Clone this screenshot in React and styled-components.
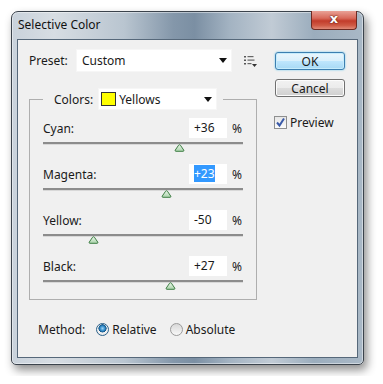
import React from "react";
import styled, { createGlobalStyle } from "styled-components";

const GlobalStyle = createGlobalStyle`
  html, body {
    margin: 0;
    padding: 0;
    background: #fff;
  }
  body {
    font-family: "Noto Sans", "DejaVu Sans", sans-serif;
    font-size: 12px;
    color: #1a1a1a;
  }
`;

const channels = [
  { name: "Cyan", value: 36 },
  { name: "Magenta", value: 23, selected: true },
  { name: "Yellow", value: -50 },
  { name: "Black", value: 27 },
];

const fmt = (v) => (v > 0 ? `+${v}` : `${v}`);

function Arrow() {
  return (
    <svg width="8" height="5" viewBox="0 0 8 5">
      <polygon points="0,0 8,0 4,5" fill="#111" />
    </svg>
  );
}

function ListIcon() {
  return (
    <svg width="13" height="12" viewBox="0 0 13 12">
      <rect x="0" y="1" width="2" height="1.5" fill="#555" />
      <rect x="0" y="4.5" width="2" height="1.5" fill="#555" />
      <rect x="0" y="8" width="2" height="1.5" fill="#555" />
      <rect x="3.5" y="1" width="6" height="1.2" fill="#666" />
      <rect x="3.5" y="4.5" width="7" height="1.2" fill="#666" />
      <rect x="3.5" y="8" width="4" height="1.2" fill="#666" />
      <polygon points="8,9 13,9 10.5,12" fill="#333" />
    </svg>
  );
}

function Thumb() {
  return (
    <svg width="11" height="8" viewBox="0 0 11 8">
      <defs>
        <linearGradient id="thumbFill" x1="0" y1="0" x2="0" y2="1">
          <stop offset="0" stopColor="#eaf6ea" />
          <stop offset="1" stopColor="#a9d2a9" />
        </linearGradient>
      </defs>
      <path
        d="M4.6 1.2 Q5.5 0.2 6.4 1.2 L9.8 6.2 Q10.2 7.3 9 7.3 L2 7.3 Q0.8 7.3 1.2 6.2 Z"
        fill="url(#thumbFill)"
        stroke="#3f7f45"
        strokeWidth="1"
      />
    </svg>
  );
}

function CheckMark() {
  return (
    <svg width="11" height="11" viewBox="0 0 11 11">
      <path d="M2 5.5 L4.5 8.5 L9 1.5" fill="none" stroke="#3a5aa8" strokeWidth="2" />
    </svg>
  );
}

export default function App() {
  return (
    <Page>
      <GlobalStyle />
      <Window>
        <TitleBar>
          <Title>Selective Color</Title>
          <CloseButton>x</CloseButton>
        </TitleBar>
        <Client>
          <LeftCol>
            <PresetRow>
              <FieldLabel>Preset:</FieldLabel>
              <Select width={156} height={23}>
                <span>Custom</span>
                <Arrow />
              </Select>
              <IconSlot>
                <ListIcon />
              </IconSlot>
            </PresetRow>

            <Group>
              <Legend>
                <span>Colors:</span>
                <Select width={119} height={22}>
                  <ColorName>
                    <Swatch />
                    Yellows
                  </ColorName>
                  <Arrow />
                </Select>
              </Legend>
              <Rows>
                {channels.map((c) => (
                  <Row key={c.name}>
                    <RowTop>
                      <RowLabel>{c.name}:</RowLabel>
                      <ValueBox>
                        <ValueText selected={c.selected}>{fmt(c.value)}</ValueText>
                      </ValueBox>
                      <Percent>%</Percent>
                    </RowTop>
                    <TrackArea>
                      <TrackLine />
                      <ThumbWrap style={{ left: `${((c.value + 100) / 200) * 100}%` }}>
                        <Thumb />
                      </ThumbWrap>
                    </TrackArea>
                  </Row>
                ))}
              </Rows>
            </Group>

            <MethodRow>
              <MethodLabel>Method:</MethodLabel>
              <Option>
                <Radio checked />
                Relative
              </Option>
              <Option>
                <Radio />
                Absolute
              </Option>
            </MethodRow>
          </LeftCol>

          <RightCol>
            <Button primary>OK</Button>
            <Button>Cancel</Button>
            <CheckRow>
              <CheckBox>
                <CheckMark />
              </CheckBox>
              Preview
            </CheckRow>
          </RightCol>
        </Client>
      </Window>
    </Page>
  );
}

const Page = styled.div`
  padding: 11px;
  width: 353px;
`;

const Window = styled.div`
  width: 353px;
  height: 354px;
  box-sizing: border-box;
  border: 1px solid #3b434c;
  border-radius: 7px 7px 5px 5px;
  padding: 0 5px 6px 5px;
  display: flex;
  flex-direction: column;
  background: linear-gradient(
    to right,
    #c9d2db 0%,
    #d7dde3 12%,
    #b9c5d0 32%,
    #8497aa 46%,
    #7b8fa3 52%,
    #a3b3c2 62%,
    #c1cbd5 74%,
    #9badbd 86%,
    #a9b8c6 100%
  );
  box-shadow: 3px 5px 10px rgba(0, 0, 0, 0.45),
    inset 0 0 0 1px rgba(255, 255, 255, 0.45);
`;

const TitleBar = styled.div`
  display: flex;
  align-items: flex-start;
  height: 27px;
`;

const Title = styled.div`
  line-height: 26px;
  padding-left: 1px;
  color: #111;
`;

const CloseButton = styled.div`
  margin-left: auto;
  margin-right: 1px;
  margin-top: -1px;
  width: 46px;
  height: 19px;
  box-sizing: border-box;
  border: 1px solid #6e2a22;
  border-top: none;
  border-radius: 0 0 4px 4px;
  background: linear-gradient(#e9a196 0%, #d8695a 40%, #c23c2b 55%, #cf5a45 80%, #e08a78 100%);
  color: #fff;
  font-family: "DejaVu Sans", sans-serif;
  font-weight: bold;
  font-size: 13px;
  line-height: 16px;
  text-align: center;
  text-shadow: 0 0 2px #5a1a12, 0 0 1px #5a1a12;
`;

const Client = styled.div`
  flex: 1;
  display: flex;
  background: #f0f0f0;
  border: 1px solid #56687a;
  padding: 9px 0 0 11px;
`;

const LeftCol = styled.div`
  width: 228px;
  display: flex;
  flex-direction: column;
`;

const PresetRow = styled.div`
  display: flex;
  align-items: center;
  height: 23px;
`;

const FieldLabel = styled.div`
  width: 47px;
`;

const Select = styled.div`
  width: ${(p) => p.width}px;
  height: ${(p) => p.height}px;
  box-sizing: border-box;
  background: #fff;
  border: 1px solid #f6f6f6;
  display: flex;
  align-items: center;
  justify-content: space-between;
  padding: 0 4px 0 5px;
`;

const IconSlot = styled.div`
  margin-left: 12px;
  display: flex;
`;

const Group = styled.fieldset`
  margin: 16px 0 0;
  padding: 0 13px 9px;
  border: 1px solid #aeaeae;
  min-width: 0;
`;

const Legend = styled.legend`
  display: flex;
  align-items: center;
  padding: 0 6px 0 11px;
  gap: 5px;
`;

const ColorName = styled.span`
  display: flex;
  align-items: center;
  gap: 3px;
  margin-left: -3px;
`;

const Swatch = styled.span`
  width: 15px;
  height: 14px;
  box-sizing: border-box;
  background: #ffff00;
  border: 1px solid #333;
`;

const Rows = styled.div`
  display: flex;
  flex-direction: column;
  gap: 12px;
  margin-top: 8px;
`;

const Row = styled.div`
  display: flex;
  flex-direction: column;
`;

const RowTop = styled.div`
  display: flex;
  align-items: center;
  height: 20px;
`;

const RowLabel = styled.div`
  flex: 1;
`;

const ValueBox = styled.div`
  width: 38px;
  height: 20px;
  box-sizing: border-box;
  background: #fff;
  padding-left: 5px;
  line-height: 20px;
`;

const ValueText = styled.span`
  background: ${(p) => (p.selected ? "#3399ff" : "transparent")};
  color: ${(p) => (p.selected ? "#fff" : "inherit")};
`;

const Percent = styled.div`
  margin-left: 5px;
  width: 11px;
`;

const TrackArea = styled.div`
  position: relative;
  height: 10px;
  margin-top: 4px;
`;

const TrackLine = styled.div`
  height: 2px;
  background: #8c8c8c;
  border-bottom: 1px solid #d8d8d8;
`;

const ThumbWrap = styled.div`
  position: absolute;
  top: 2px;
  margin-left: -5px;
  display: flex;
`;

const MethodRow = styled.div`
  display: flex;
  align-items: center;
  height: 16px;
  margin-top: 21px;
  padding-left: 9px;
`;

const MethodLabel = styled.div`
  margin-right: 11px;
`;

const Option = styled.div`
  display: flex;
  align-items: center;
  gap: 3px;
  margin-right: 13px;
`;

const Radio = styled.span`
  width: 13px;
  height: 13px;
  box-sizing: border-box;
  border-radius: 50%;
  border: 1px solid ${(p) => (p.checked ? "#2c628b" : "#9a9a9a")};
  background: ${(p) =>
    p.checked
      ? "radial-gradient(circle at 50% 40%, #9fd4f5 0%, #2b86c6 30%, #12507f 45%, #f4f4f4 50%, #dcdcdc 100%)"
      : "linear-gradient(#d8d8d8, #f8f8f8)"};
`;

const RightCol = styled.div`
  margin-left: 18px;
  padding-top: 3px;
  display: flex;
  flex-direction: column;
  width: 70px;
`;

const Button = styled.div`
  height: 18px;
  box-sizing: border-box;
  border-radius: 3px;
  border: 1px solid ${(p) => (p.primary ? "#3c7fb1" : "#707070")};
  background: ${(p) =>
    p.primary
      ? "linear-gradient(#eaf6fd 0%, #d9f0fc 50%, #bee6fd 52%, #a7d9f5 100%)"
      : "linear-gradient(#f2f2f2 0%, #ebebeb 50%, #dddddd 52%, #cfcfcf 100%)"};
  box-shadow: ${(p) => (p.primary ? "0 0 2px #5fc4ee, inset 0 0 0 1px #c6ecfc" : "inset 0 0 0 1px #fcfcfc")};
  display: flex;
  align-items: center;
  justify-content: center;
  margin-bottom: 9px;
`;

const CheckRow = styled.div`
  display: flex;
  align-items: center;
  gap: 3px;
  margin-top: 8px;
  margin-left: -1px;
  white-space: nowrap;
`;

const CheckBox = styled.span`
  width: 13px;
  height: 13px;
  box-sizing: border-box;
  border: 1px solid #8e8f8f;
  background: linear-gradient(#e6e6e6, #fbfbfb);
  display: flex;
  align-items: center;
  justify-content: center;
`;
